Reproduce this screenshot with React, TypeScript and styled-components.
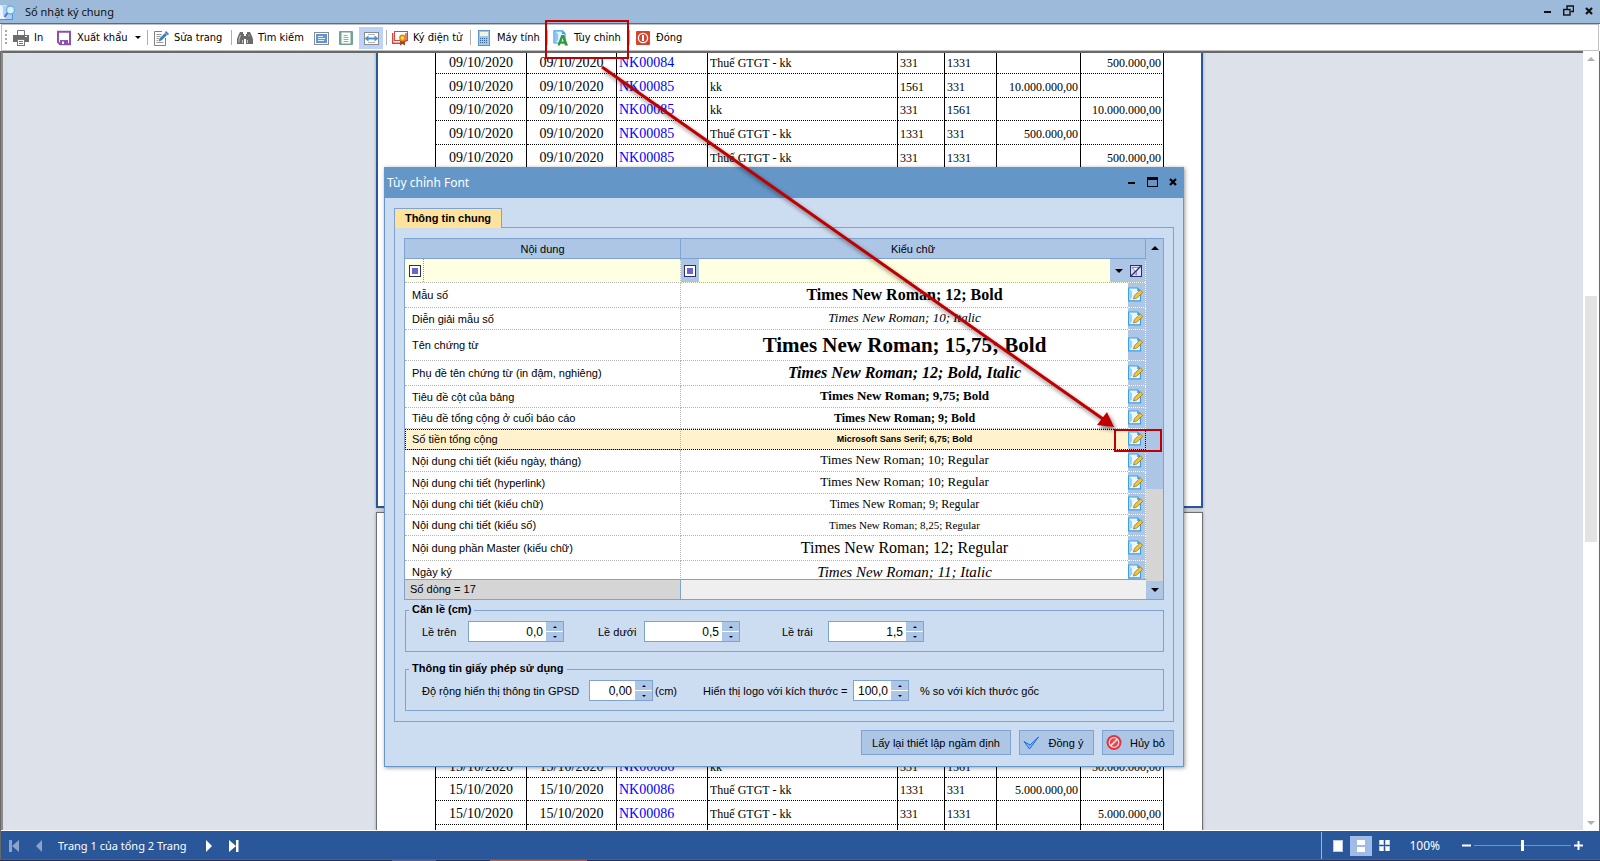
import React from "react";
import styled, { createGlobalStyle, css } from "styled-components";

const UI = `"DejaVu Sans Condensed", "DejaVu Sans", sans-serif`;
const SEGOE = `"Noto Sans", "Open Sans", sans-serif`;
const SANS = `"Liberation Sans", Arial, sans-serif`;
const SERIF = `"Liberation Serif", "Times New Roman", serif`;
const RED = "#c00000";
const LINE = "#7ea3d1";
const FILL = "#adc6e6";

const Global = createGlobalStyle`
  *, *::before, *::after { box-sizing: border-box; }
  body { margin: 0; background: #2f2945; }
  button, input { font: inherit; color: inherit; }
  button { border: 0; padding: 0; background: none; }
`;

/* ---------- application frame ---------- */

const AppFrame = styled.div`
  position: relative;
  display: flex;
  flex-direction: column;
  height: 100vh;
  overflow: hidden;
  background: #fff;
`;

const TitleBar = styled.header`
  display: flex;
  flex: none;
  align-items: center;
  height: 24px;
  padding-right: 4px;
  background: #9dbada;
  border-bottom: 1px solid #696969;
  font: 12px/22px ${SEGOE};
  color: #111;
  svg { flex: none; }
`;

const TitleText = styled.h1`
  flex: 1;
  margin: 0 0 0 9px;
  font-size: 11px;
  font-weight: 400;
`;

const WindowButtons = styled.div`
  display: flex;
  gap: 7px;
  padding-bottom: 2px;
  button { display: flex; width: 14px; height: 14px; align-items: center; justify-content: center; }
`;

const Toolbar = styled.nav`
  display: flex;
  flex: none;
  align-items: center;
  height: 27px;
  margin: 0 1px;
  padding-left: 3px;
  border: 1px solid #c0c0c0;
  background: #fff;
  font: 11px/14px ${UI};
  color: #000;
`;

const Grip = styled.span`
  width: 2px;
  height: 16px;
  margin-right: 1px;
  background: repeating-linear-gradient(#a9a9a9 0 2px, transparent 2px 4px);
`;

const Tool = styled.button<{ $w: number }>`
  display: flex;
  align-items: center;
  gap: 5px;
  flex: none;
  width: ${(p) => p.$w}px;
  height: 22px;
  padding-left: 5px;
  white-space: nowrap;
  svg { flex: none; }
`;

const Caret = styled.svg`
  margin-left: auto;
  margin-right: 6px;
`;

const ViewTool = styled.button<{ $on?: boolean }>`
  display: flex;
  flex: none;
  align-items: center;
  justify-content: center;
  width: 24px;
  height: 22px;
  margin-right: 1px;
  background: ${(p) => (p.$on ? "#bdd3fa" : "transparent")};
`;

const ToolGap = styled.span`
  width: 2px;
  flex: none;
`;

const Sep = styled.span`
  flex: none;
  width: 1px;
  height: 15px;
  background: #b0b0b0;
`;

/* ---------- report preview ---------- */

const Workspace = styled.main`
  display: flex;
  flex: 1;
  min-height: 0;
  border-right: 1px solid #696969;
  border-left: 1px solid #696969;
`;

const Preview = styled.div`
  flex: 1;
  display: flex;
  flex-direction: column;
  align-items: center;
  overflow: hidden;
  padding-right: 7px;
  margin-bottom: 1px;
  border-top: 2px solid #696969;
  border-left: 2px solid #8a8a8a;
  background: #dde1e9;
`;

const Sheet = styled.section<{ $active?: boolean }>`
  flex: none;
  width: 827px;
  background: #fff;
  box-shadow: 0 0 3px #9aa0aa;
  ${(p) =>
    p.$active
      ? css`
          min-height: 458px;
          margin: -3px 0 4px;
          padding-left: 57px;
          border: 2px solid #2a579a;
          border-top: 0;
        `
      : css`
          padding: 241px 0 0 58px;
          border: 1px solid #6f6f6f;
        `}
`;

const Ledger = styled.table`
  table-layout: fixed;
  width: 729px;
  border-collapse: separate;
  border-spacing: 0;
  border-left: 1px solid #000;
  font: 14px/16px ${SERIF};
  color: #000;
`;

const LedgerRow = styled.tr<{ $h: number }>`
  height: ${(p) => p.$h}px;
`;

const Cell = styled.td<{ $kind?: "date" | "text" | "amount" }>`
  padding: 2px 2px 0;
  border-right: 1px solid #000;
  border-bottom: 1px dotted #000;
  text-align: left;
  white-space: nowrap;
  font-size: 12px;
  ${(p) => p.$kind === "date" && "text-align: center; font-size: 14px;"}
  ${(p) => p.$kind === "amount" && "text-align: right;"}
`;

const Voucher = styled.a`
  color: #00f;
  font-size: 14px;
  text-decoration: none;
`;

const DocScroll = styled.div`
  display: flex;
  flex: none;
  flex-direction: column;
  align-items: center;
  width: 16px;
  padding: 6px 0;
  background: #fff;
`;

const DocTrack = styled.div`
  flex: 1;
  display: flex;
  flex-direction: column;
  width: 12px;
  &::before { content: ""; flex: 235; }
  &::after { content: ""; flex: 279; }
`;

const DocThumb = styled.div`
  flex: 245;
  background: #e3e3e3;
`;

/* ---------- status bar ---------- */

const StatusBar = styled.footer`
  display: flex;
  flex: none;
  align-items: center;
  height: 29px;
  padding-top: 1px;
  border-left: 1px solid #696969;
  border-bottom: 1px solid #5b5b75;
  background: #2a579a;
  font: 11px/26px ${SEGOE};
  color: #fff;
`;

const PagerButton = styled.button<{ $w: number }>`
  display: flex;
  align-items: center;
  width: ${(p) => p.$w}px;
  height: 24px;
`;

const PagerText = styled.span`
  width: 148px;
  padding-top: 1px;
`;

const StatusTools = styled.div`
  display: flex;
  align-items: center;
  height: 100%;
  margin-left: auto;
  padding: 0 17px 0 5px;
  border-left: 1px solid #9fb4d6;
`;

const ModeButton = styled.button<{ $on?: boolean }>`
  display: flex;
  align-items: center;
  justify-content: center;
  width: 22px;
  height: 20px;
  background: ${(p) => (p.$on ? "#a0bbe8" : "transparent")};
`;

const ModeGroup = styled.div`
  display: flex;
  align-items: center;
  gap: 1px;
`;

const ZoomText = styled.output`
  margin: 0 22px 0 14px;
  font-size: 12px;
`;

const ZoomStep = styled.button`
  display: flex;
  align-items: center;
`;

const ZoomRange = styled.input`
  appearance: none;
  width: 97px;
  height: 12px;
  margin: 0 3px;
  background: linear-gradient(#6f92c9, #6f92c9) center / 100% 1px no-repeat;
  &::-webkit-slider-thumb { appearance: none; width: 3px; height: 11px; background: #fff; }
  &::-moz-range-thumb { width: 3px; height: 11px; border: 0; border-radius: 0; background: #fff; }
`;

const TaskStrip = styled.div`
  flex: none;
  height: 1px;
  background: linear-gradient(90deg, #2f2945 392px, #5f5a8d 392px 436px, #2f2945 436px 490px, #b5614a 490px 587px, #2f2945 587px);
`;

/* ---------- font dialog ---------- */

const Dialog = styled.section`
  position: absolute;
  top: 167px;
  left: calc(50% - 416px);
  width: 800px;
  border: 1px solid #6496c8;
  background: #ccdcf1;
  box-shadow: 1px 1px 4px rgba(0, 0, 0, 0.4);
  font: 11px/14px ${SANS};
  color: #000;
`;

const DialogTitle = styled.header`
  display: flex;
  align-items: center;
  justify-content: space-between;
  height: 30px;
  padding: 0 3px 0 2px;
  background: #6496c8;
  color: #fff;
  h2 { margin: 0; font: 12px/28px ${SEGOE}; }
  button { color: #000; }
`;

const DialogBody = styled.div`
  padding: 10px 9px 11px;
`;

const Tab = styled.button`
  position: relative;
  display: block;
  width: 108px;
  height: 20px;
  margin-bottom: -1px;
  padding-bottom: 2px;
  border: 1px solid ${LINE};
  border-bottom: 0;
  background: #ffe29b;
  font-weight: 700;
`;

const Panel = styled.div`
  padding: 10px 9px;
  border: 1px solid ${LINE};
`;

const Grid = styled.div`
  display: flex;
  border: 1px solid ${LINE};
  background: #fff;
`;

const GridMain = styled.div`
  flex: 1;
  min-width: 0;
`;

const GridView = styled.div`
  height: 340px;
  overflow: hidden;
`;

const FontTable = styled.table`
  table-layout: fixed;
  width: 100%;
  border-collapse: separate;
  border-spacing: 0;
  th {
    height: 20px;
    padding: 0;
    border-right: 1px solid ${LINE};
    border-bottom: 1px solid ${LINE};
    background: ${FILL};
    font-weight: 400;
    line-height: 18px;
  }
`;

const NameCol = styled.col`
  width: 276px;
`;

const EditCol = styled.col`
  width: 18px;
`;

const FilterCell = styled.td`
  height: 24px;
  padding: 0;
  border-right: 1px dotted #bbb;
  border-bottom: 1px dotted #b4b4b4;
  background: #ffffe1;
`;

const FilterBox = styled.div`
  display: flex;
  height: 23px;
`;

const FilterInput = styled.input`
  flex: 1;
  min-width: 0;
  padding: 0 4px;
  border: 0;
  background: transparent;
`;

const FilterButton = styled.button<{ $w: number; $plain?: boolean }>`
  display: flex;
  flex: none;
  align-items: center;
  justify-content: center;
  width: ${(p) => p.$w}px;
  padding-left: ${(p) => (p.$plain ? 1 : 0)}px;
  background: ${(p) => (p.$plain ? "transparent" : FILL)};
  border-right: ${(p) => (p.$plain ? "1px dotted #999" : "0")};
`;

const FontRow = styled.tr<{ $h: number; $selected?: boolean }>`
  height: ${(p) => p.$h}px;
  background: ${(p) => (p.$selected ? "#fff2cc" : "#fff")};
  ${(p) => p.$selected && "outline: 1px dotted #000; outline-offset: -1px;"}
`;

const NameCell = styled.td`
  padding: 0 0 0 7px;
  border-right: 1px dotted #b4b4b4;
  border-bottom: 1px dotted #b4b4b4;
`;

const SampleCell = styled.td<{ $size: number; $bold?: boolean; $italic?: boolean; $sans?: boolean }>`
  padding: 0 0 1px;
  border-bottom: 1px dotted #b4b4b4;
  text-align: center;
  white-space: nowrap;
  font-family: ${(p) => (p.$sans ? SANS : SERIF)};
  font-size: ${(p) => p.$size}px;
  font-weight: ${(p) => (p.$bold ? 700 : 400)};
  font-style: ${(p) => (p.$italic ? "italic" : "normal")};
  line-height: 18px;
`;

const EditCell = styled.td`
  padding: 0;
  border-right: 1px dotted #fff;
  border-bottom: 1px dotted #fff;
  background: ${FILL};
  button { display: block; }
  svg { display: block; }
`;

const GridFooter = styled.div`
  display: flex;
  height: 20px;
  border-top: 1px solid ${LINE};
  background: #efefef;
  line-height: 18px;
`;

const RowCount = styled.span`
  width: 276px;
  padding-left: 5px;
  border-right: 1px solid ${LINE};
  background: #d5d5d5;
`;

const GridScroll = styled.div`
  display: flex;
  flex: none;
  flex-direction: column;
  width: 17px;
  background: #d5d5d5;
`;

const GridThumb = styled.div`
  height: 232px;
  background: ${FILL};
`;

const ArrowButton = styled.button`
  display: flex;
  align-items: center;
  justify-content: center;
  height: 18px;
  background: ${FILL};
  &:last-child { margin-top: auto; }
`;

const Group = styled.fieldset`
  min-width: 0;
  margin: 2px 0 0 1px;
  padding: 3px 0 9px 16px;
  border: 1px solid ${LINE};
  & + & { margin-top: 9px; }
  legend { margin-left: -13px; padding: 0 3px 2px; font-weight: 700; line-height: 14px; }
`;

const Fields = styled.div`
  display: flex;
  align-items: center;
`;

const FieldLabel = styled.label<{ $w?: number; $before?: number }>`
  width: ${(p) => (p.$w ? `${p.$w}px` : "auto")};
  margin-left: ${(p) => p.$before ?? 0}px;
  padding-top: 1px;
  white-space: nowrap;
`;

const SpinBox = styled.span<{ $w: number }>`
  display: flex;
  flex: none;
  width: ${(p) => p.$w}px;
  height: 21px;
  border: 1px solid ${LINE};
  background: #fff;
  input {
    flex: 1;
    width: 0;
    min-width: 0;
    padding: 0 3px 0 0;
    border: 0;
    background: none;
    text-align: right;
    font-size: 12px;
  }
`;

const SpinButtons = styled.span`
  display: flex;
  flex-direction: column;
  gap: 1px;
  width: 17px;
  button { flex: 1; display: flex; align-items: center; justify-content: center; background: ${FILL}; }
`;

const Actions = styled.div`
  display: flex;
  justify-content: flex-end;
  margin-top: 8px;
`;

const ActionButton = styled.button<{ $w: number }>`
  display: flex;
  align-items: center;
  width: ${(p) => p.$w}px;
  height: 25px;
  margin-left: 8px;
  border: 1px solid ${LINE};
  background: ${FILL};
  svg { flex: none; margin-left: 3px; }
  span { flex: 1; text-align: center; white-space: nowrap; }
`;

const Callout = styled.svg`
  position: absolute;
  top: 0;
  left: calc(50% - 260px);
  pointer-events: none;
`;

const ArrowShape = styled.g`
  filter: drop-shadow(2px 3px 2px rgba(0, 0, 0, 0.5));
`;

/* ---------- icons ---------- */

const Svg = ({ w = 16, h = 16, children }: { w?: number; h?: number; children: React.ReactNode }) => (
  <svg width={w} height={h} viewBox={`0 0 ${w} ${h}`} aria-hidden="true">
    {children}
  </svg>
);

const AppIcon = () => (
  <Svg>
    <path d="M0 1h6v14H0z" fill="#e8f4ff" />
    <path d="M1 1l2 2v8l3 4h6V2H7" fill="#a9d3f5" />
    <path d="M0 15.500h12.500V10" fill="none" stroke="#3e96d8" />
    <circle cx="10.500" cy="6" r="4" fill="#d9f0fd" stroke="#6db1e4" strokeWidth="1.400" />
    <path d="M7.500 9l-3 4" stroke="#6c66c8" strokeWidth="2" />
  </Svg>
);
const PrintIcon = () => (
  <Svg>
    <path d="M4.500 5V.5h7V5" fill="#fff" stroke="#777" />
    <rect x="0" y="5" width="16" height="7" fill="#6c6c6c" />
    <rect x="12" y="6" width="2" height="1" fill="#fff" />
    <rect x="4.500" y="9.500" width="7" height="6" fill="#fff" stroke="#777" />
    <path d="M6 11.500h4M6 13.500h4" stroke="#3b7fd0" />
  </Svg>
);
const SaveIcon = () => (
  <Svg>
    <path d="M2 1.800h12v12.400H4l-2-2z" fill="#fff" stroke="#8a52ae" strokeWidth="2" />
    <rect x="4" y="10" width="8" height="4" fill="#8a52ae" />
    <rect x="6" y="11.500" width="2" height="2.500" fill="#fff" />
  </Svg>
);
const EditPageIcon = () => (
  <Svg>
    <path d="M12.500 8v7.500h-11V1.500H9" fill="#fff" stroke="#808080" />
    <path d="M3.500 4.500h5M3.500 6.500h4M3.500 8.500h2.500M3.500 10.500h1.500M3.500 12.500h7" stroke="#9a9a9a" />
    <path d="M5.500 11.500l1-3 5.500-5.500 2 2L8.500 10.500z" fill="#3c7dbf" />
    <path d="M13 1l3 3-1.200 1.200-3-3z" fill="#3c7dbf" />
  </Svg>
);
const BinocularsIcon = () => (
  <Svg>
    <path d="M3 2h3v2h1v10H0V9l1.500-4zM13 2h-3v2H9v10h7V9l-1.500-4z" fill="#6b6b6b" />
    <path d="M6 6h4v3H6z" fill="#6b6b6b" />
    <path d="M3.500 5L2 9.500v3M12 5v1M10.500 10v3M5.500 10v3" fill="none" stroke="#c9c9c9" />
  </Svg>
);
const WidePageIcon = () => (
  <Svg>
    <rect x="1.500" y="2.500" width="14" height="12" fill="#fff" stroke="#8b8b8b" />
    <rect x="3" y="4" width="11" height="9" fill="#5b97db" />
    <path d="M5 6.500h5M5 8.500h7M5 10.500h6" stroke="#e4effb" />
  </Svg>
);
const TallPageIcon = () => (
  <Svg>
    <rect x="1" y="1" width="14" height="14" rx="1" fill="#72a493" />
    <rect x="3.500" y="2.500" width="9" height="11" fill="#fff" />
    <path d="M5.500 5.500h4M5.500 7.500h5M5.500 9.500h5M5.500 11.500h5" stroke="#a3a3a3" />
  </Svg>
);
const FitWidthIcon = () => (
  <Svg>
    <rect x="1.500" y="2.500" width="14" height="12" fill="#fff" stroke="#8b8b8b" />
    <path d="M5 4.500h7M5 12.500h7" stroke="#b5b5b5" />
    <path d="M1.500 8.500l4-3v2h6v-2l4 3-4 3v-2h-6v2z" fill="#4d8fd4" />
  </Svg>
);
const SignIcon = () => (
  <Svg>
    <rect x="2.500" y="1.500" width="13" height="9" fill="#fff" stroke="#d9453c" />
    <path d="M.7 3v10.300h8M14 3v8h-3" fill="none" stroke="#d9453c" strokeWidth="1.400" />
    <path d="M8 10v5.500l2.500-1.500 2.500 1.500V10z" fill="#a5442c" />
    <circle cx="10.500" cy="8" r="2.600" fill="#ffe63a" stroke="#e08b1e" strokeWidth="1.600" />
  </Svg>
);
const CalcIcon = () => (
  <Svg>
    <rect x="2.500" y=".5" width="11" height="15" fill="#9cc8ee" stroke="#5f97cc" />
    <rect x="4" y="2" width="8" height="4" fill="#f6f2dd" />
    <path d="M4 8.500h8M4 10.500h8M4 12.500h8" stroke="#38628f" strokeDasharray="1 1" />
  </Svg>
);
const CustomIcon = () => (
  <Svg>
    <path d="M1 .8h8.500L12 3.500V13H1z" fill="#dff1fd" stroke="#3f9be0" strokeWidth="1.200" />
    <path d="M2 1l3 3v6l-3 3z" fill="#8cc8f4" />
    <path d="M9 1l3 3H9z" fill="#3f9be0" />
    <path d="M4.500 15.500L8.300 5h2.800l3.900 10.500h-3.200l-.5-2H7.500l-.6 2z M9.500 8l-1 3.500h2.200z" fill="#2f9a3a" fillRule="evenodd" />
  </Svg>
);
const PowerIcon = () => (
  <Svg>
    <rect x="1" y="1" width="14" height="14" rx="1" fill="#d9432a" />
    <circle cx="8" cy="8" r="4.600" fill="none" stroke="#fff" strokeWidth="1.300" />
    <path d="M8 5v6" stroke="#fff" strokeWidth="2" />
  </Svg>
);
const RowEditIcon = () => (
  <Svg>
    <path d="M.6 1h8.900l3 3v9.800H.6z" fill="#e9f6fe" stroke="#3e9fe3" strokeWidth="1.200" />
    <path d="M1.200 1.500L4 4.500v6l-2.800 2.500z" fill="#9ad2f7" />
    <path d="M9.200 .5v3.500h3.500z" fill="#4aa7e6" />
    <path d="M5.500 12l.8-3.200 6-5.800 2.500 2.300-6 5.700z" fill="#f2c638" stroke="#9c7a1f" strokeWidth=".8" />
  </Svg>
);
const FilterMark = () => (
  <Svg w={12} h={12}>
    <rect x=".5" y=".5" width="11" height="11" fill="#fff" stroke="#2c2f6c" />
    <rect x="3" y="3" width="6" height="6" fill="#6a66cc" />
  </Svg>
);
const FilterClear = () => (
  <Svg w={12} h={12}>
    <rect x=".5" y=".5" width="11" height="11" fill="#dcdcff" stroke="#2c2f6c" />
    <path d="M2 2.500h7L6.500 6v4L5 9V6z" fill="#f6f6ff" stroke="#7472c0" strokeWidth=".8" />
    <path d="M1 11L11 1" stroke="#2c2f6c" strokeWidth="1.300" />
  </Svg>
);
const Up = ({ c = "#000" }) => (
  <Svg w={8} h={4}>
    <path d="M0 4h8L4 0z" fill={c} />
  </Svg>
);
const Down = ({ c = "#000" }) => (
  <Svg w={8} h={4}>
    <path d="M0 0h8L4 4z" fill={c} />
  </Svg>
);
const Minimize = () => (
  <Svg w={7} h={8}>
    <path d="M0 5h7" stroke="currentColor" strokeWidth="2" />
  </Svg>
);
const Restore = () => (
  <Svg w={11} h={11}>
    <path d="M4 4V1h6.500v5.500H8" fill="none" stroke="currentColor" strokeWidth="1.400" />
    <rect x=".7" y="4.500" width="6.300" height="5.500" fill="none" stroke="currentColor" strokeWidth="1.400" />
  </Svg>
);
const Maximize = () => (
  <Svg w={11} h={10}>
    <rect x=".5" y=".5" width="10" height="9" fill="none" stroke="currentColor" />
    <path d="M0 1.500h11" stroke="currentColor" strokeWidth="3" />
  </Svg>
);
const Close = () => (
  <Svg w={8} h={8}>
    <path d="M1 1l6 6M7 1L1 7" stroke="currentColor" strokeWidth="2.200" />
  </Svg>
);
const CheckIcon = () => (
  <Svg>
    <path d="M1 6.500L6.500 14 15.500 2 7 10z" fill="#7fb6f2" stroke="#1d6fd0" strokeWidth="1" />
  </Svg>
);
const CancelIcon = () => (
  <Svg>
    <circle cx="8" cy="7.500" r="7.500" fill="#e03540" />
    <circle cx="8" cy="7.500" r="4.800" fill="#e8434e" stroke="#ffd9dc" strokeWidth="1.300" />
    <path d="M4.600 10.900l6.800-6.800" stroke="#ffd9dc" strokeWidth="1.800" />
  </Svg>
);

/* ---------- data ---------- */

type Entry = [number, string, string, string, string, string, string, string];

const firstPage: Entry[] = [
  [24, "09/10/2020", "NK00084", "Thuế GTGT - kk", "331", "1331", "", "500.000,00"],
  [24, "09/10/2020", "NK00085", "kk", "1561", "331", "10.000.000,00", ""],
  [23, "09/10/2020", "NK00085", "kk", "331", "1561", "", "10.000.000,00"],
  [24, "09/10/2020", "NK00085", "Thuế GTGT - kk", "1331", "331", "500.000,00", ""],
  [24, "09/10/2020", "NK00085", "Thuế GTGT - kk", "331", "1331", "", "500.000,00"],
];

const secondPage: Entry[] = [
  [24, "15/10/2020", "NK00086", "kk", "331", "1561", "", "50.000.000,00"],
  [23, "15/10/2020", "NK00086", "Thuế GTGT - kk", "1331", "331", "5.000.000,00", ""],
  [24, "15/10/2020", "NK00086", "Thuế GTGT - kk", "331", "1331", "", "5.000.000,00"],
  [24, "", "", "", "", "", "", ""],
];

interface FontItem {
  h: number;
  name: string;
  sample: string;
  size: number;
  bold?: boolean;
  italic?: boolean;
  sans?: boolean;
  selected?: boolean;
}

const fontItems: FontItem[] = [
  { h: 25, name: "Mẫu số", sample: "Times New Roman; 12; Bold", size: 16, bold: true },
  { h: 22, name: "Diễn giải mẫu số", sample: "Times New Roman; 10; Italic", size: 13, italic: true },
  { h: 31, name: "Tên chứng từ", sample: "Times New Roman; 15,75; Bold", size: 21, bold: true },
  { h: 25, name: "Phụ đề tên chứng từ (in đậm, nghiêng)", sample: "Times New Roman; 12; Bold, Italic", size: 16, bold: true, italic: true },
  { h: 22, name: "Tiêu đề cột của bảng", sample: "Times New Roman; 9,75; Bold", size: 13, bold: true },
  { h: 21, name: "Tiêu đề tổng cộng ở cuối báo cáo", sample: "Times New Roman; 9; Bold", size: 12, bold: true },
  { h: 21, name: "Số tiền tổng cộng", sample: "Microsoft Sans Serif; 6,75; Bold", size: 9, bold: true, sans: true, selected: true },
  { h: 22, name: "Nội dung chi tiết (kiểu ngày, tháng)", sample: "Times New Roman; 10; Regular", size: 13 },
  { h: 22, name: "Nội dung chi tiết (hyperlink)", sample: "Times New Roman; 10; Regular", size: 13 },
  { h: 21, name: "Nội dung chi tiết (kiểu chữ)", sample: "Times New Roman; 9; Regular", size: 12 },
  { h: 21, name: "Nội dung chi tiết (kiểu số)", sample: "Times New Roman; 8,25; Regular", size: 11 },
  { h: 25, name: "Nội dung phần Master (kiểu chữ)", sample: "Times New Roman; 12; Regular", size: 16 },
  { h: 23, name: "Ngày ký", sample: "Times New Roman; 11; Italic", size: 15, italic: true },
];

const ledgerWidths = [91, 90, 91, 190, 47, 52, 84, 83];

/* ---------- parts ---------- */

const LedgerTable = ({ rows }: { rows: Entry[] }) => (
  <Ledger>
    <colgroup>
      {ledgerWidths.map((w, i) => (
        <col key={i} width={w} />
      ))}
    </colgroup>
    <tbody>
      {rows.map(([h, date, no, text, debit, credit, inAmt, outAmt], i) => (
        <LedgerRow key={i} $h={h}>
          <Cell $kind="date">{date}</Cell>
          <Cell $kind="date">{date}</Cell>
          <Cell>{no && <Voucher href="#">{no}</Voucher>}</Cell>
          <Cell>{text}</Cell>
          <Cell>{debit}</Cell>
          <Cell>{credit}</Cell>
          <Cell $kind="amount">{inAmt}</Cell>
          <Cell $kind="amount">{outAmt}</Cell>
        </LedgerRow>
      ))}
    </tbody>
  </Ledger>
);

const Spin = ({ id, w, value }: { id: string; w: number; value: string }) => (
  <SpinBox $w={w}>
    <input id={id} type="text" defaultValue={value} />
    <SpinButtons>
      <button type="button" aria-label="+">
        <Svg w={4} h={2}><path d="M0 2h4L2 0z" fill="#000040" /></Svg>
      </button>
      <button type="button" aria-label="-">
        <Svg w={4} h={2}><path d="M0 0h4L2 2z" fill="#000040" /></Svg>
      </button>
    </SpinButtons>
  </SpinBox>
);

const FontDialog = () => (
  <Dialog role="dialog" aria-labelledby="font-title">
    <DialogTitle>
      <h2 id="font-title">Tùy chỉnh Font</h2>
      <WindowButtons>
        <button type="button"><Minimize /></button>
        <button type="button"><Maximize /></button>
        <button type="button"><Close /></button>
      </WindowButtons>
    </DialogTitle>
    <DialogBody>
      <Tab type="button">Thông tin chung</Tab>
      <Panel>
        <Grid>
          <GridMain>
            <GridView>
              <FontTable>
                <colgroup>
                  <NameCol />
                  <col />
                  <EditCol />
                </colgroup>
                <thead>
                  <tr>
                    <th>Nội dung</th>
                    <th colSpan={2}>Kiểu chữ</th>
                  </tr>
                </thead>
                <tbody>
                  <tr>
                    <FilterCell>
                      <FilterBox>
                        <FilterButton type="button" $w={19} $plain><FilterMark /></FilterButton>
                        <FilterInput aria-label="Nội dung" />
                      </FilterBox>
                    </FilterCell>
                    <FilterCell colSpan={2}>
                      <FilterBox>
                        <FilterButton type="button" $w={18}><FilterMark /></FilterButton>
                        <FilterInput aria-label="Kiểu chữ" />
                        <FilterButton type="button" $w={17}><Down /></FilterButton>
                        <FilterButton type="button" $w={18}><FilterClear /></FilterButton>
                      </FilterBox>
                    </FilterCell>
                  </tr>
                  {fontItems.map((f) => (
                    <FontRow key={f.name} $h={f.h} $selected={f.selected}>
                      <NameCell>{f.name}</NameCell>
                      <SampleCell $size={f.size} $bold={f.bold} $italic={f.italic} $sans={f.sans}>
                        {f.sample}
                      </SampleCell>
                      <EditCell>
                        <button type="button"><RowEditIcon /></button>
                      </EditCell>
                    </FontRow>
                  ))}
                </tbody>
              </FontTable>
            </GridView>
            <GridFooter>
              <RowCount>Số dòng = 17</RowCount>
            </GridFooter>
          </GridMain>
          <GridScroll>
            <ArrowButton type="button"><Up /></ArrowButton>
            <GridThumb />
            <ArrowButton type="button"><Down /></ArrowButton>
          </GridScroll>
        </Grid>
        <Group>
          <legend>Căn lề (cm)</legend>
          <Fields>
            <FieldLabel htmlFor="top" $w={46}>Lề trên</FieldLabel>
            <Spin id="top" w={96} value="0,0" />
            <FieldLabel htmlFor="bottom" $w={46} $before={34}>Lề dưới</FieldLabel>
            <Spin id="bottom" w={96} value="0,5" />
            <FieldLabel htmlFor="left" $w={46} $before={42}>Lề trái</FieldLabel>
            <Spin id="left" w={96} value="1,5" />
          </Fields>
        </Group>
        <Group>
          <legend>Thông tin giấy phép sử dụng</legend>
          <Fields>
            <FieldLabel htmlFor="gpsd" $w={167}>Độ rộng hiển thị thông tin GPSD</FieldLabel>
            <Spin id="gpsd" w={64} value="0,00" />
            <FieldLabel htmlFor="gpsd" $w={48} $before={2}>(cm)</FieldLabel>
            <FieldLabel htmlFor="logo" $w={150}>Hiển thị logo với kích thước =</FieldLabel>
            <Spin id="logo" w={56} value="100,0" />
            <FieldLabel htmlFor="logo" $before={11}>% so với kích thước gốc</FieldLabel>
          </Fields>
        </Group>
      </Panel>
      <Actions>
        <ActionButton type="button" $w={150}><span>Lấy lại thiết lập ngầm định</span></ActionButton>
        <ActionButton type="button" $w={75}><CheckIcon /><span>Đồng ý</span></ActionButton>
        <ActionButton type="button" $w={72}><CancelIcon /><span>Hủy bỏ</span></ActionButton>
      </Actions>
    </DialogBody>
  </Dialog>
);

export default function App() {
  return (
    <>
      <Global />
      <AppFrame>
        <TitleBar>
          <AppIcon />
          <TitleText>Sổ nhật ký chung</TitleText>
          <WindowButtons>
            <button type="button"><Minimize /></button>
            <button type="button"><Restore /></button>
            <button type="button"><Close /></button>
          </WindowButtons>
        </TitleBar>
        <Toolbar>
          <Grip />
          <Tool type="button" $w={43}><PrintIcon />In</Tool>
          <Tool type="button" $w={96}>
            <SaveIcon />Xuất khẩu
            <Caret width="6" height="3" viewBox="0 0 6 3"><path d="M0 0h6L3 3z" /></Caret>
          </Tool>
          <Sep />
          <Tool type="button" $w={83}><EditPageIcon />Sửa trang</Tool>
          <Sep />
          <Tool type="button" $w={77}><BinocularsIcon />Tìm kiếm</Tool>
          <ViewTool type="button"><WidePageIcon /></ViewTool>
          <ViewTool type="button"><TallPageIcon /></ViewTool>
          <ViewTool type="button" $on><FitWidthIcon /></ViewTool>
          <ToolGap />
          <Sep />
          <Tool type="button" $w={83}><SignIcon />Ký điện tử</Tool>
          <Sep />
          <Tool type="button" $w={76}><CalcIcon />Máy tính</Tool>
          <Sep />
          <Tool type="button" $w={81}><CustomIcon />Tùy chỉnh</Tool>
          <Sep />
          <Tool type="button" $w={60}><PowerIcon />Đóng</Tool>
        </Toolbar>
        <Workspace>
          <Preview>
            <Sheet $active>
              <LedgerTable rows={firstPage} />
            </Sheet>
            <Sheet>
              <LedgerTable rows={secondPage} />
            </Sheet>
          </Preview>
          <DocScroll>
            <Up c="#b0b0b0" />
            <DocTrack>
              <DocThumb />
            </DocTrack>
            <Down c="#b0b0b0" />
          </DocScroll>
        </Workspace>
        <StatusBar>
          <PagerButton type="button" $w={27}>
            <Svg w={18} h={12}><path d="M8 0h3v12H8zM18 0v12l-7-6z" fill="#8ba3cd" /></Svg>
          </PagerButton>
          <PagerButton type="button" $w={30}>
            <Svg w={15} h={12}><path d="M14 0v12L8 6z" fill="#8ba3cd" /></Svg>
          </PagerButton>
          <PagerText>Trang 1 của tổng 2 Trang</PagerText>
          <PagerButton type="button" $w={23}>
            <Svg w={7} h={12}><path d="M0 0v12l6-6z" fill="#fff" /></Svg>
          </PagerButton>
          <PagerButton type="button" $w={12}>
            <Svg w={10} h={12}><path d="M0 0v12l7-6zM7 0h2.500v12H7z" fill="#fff" /></Svg>
          </PagerButton>
          <StatusTools>
            <ModeGroup>
              <ModeButton type="button">
                <Svg w={10} h={12}><rect width="10" height="12" fill="#b9cdea" /><rect x="1" y="1" width="8" height="10" fill="#fff" /></Svg>
              </ModeButton>
              <ModeButton type="button" $on>
                <Svg w={10} h={12}><path d="M1 0h8v5H1zM1 7h8v5H1z" fill="#fff" /></Svg>
              </ModeButton>
              <ModeButton type="button">
                <Svg w={11} h={11}><path d="M0 0h5v5H0zM6 0h5v5H6zM0 6h5v5H0zM6 6h5v5H6z" fill="#b9cdea" /><path d="M1 0h3v4H1zM7 0h3v4H7zM1 7h3v4H1zM7 7h3v4H7z" fill="#fff" /></Svg>
              </ModeButton>
            </ModeGroup>
            <ZoomText>100%</ZoomText>
            <ZoomStep type="button"><Svg w={9} h={9}><path d="M0 4.500h9" stroke="#fff" strokeWidth="2" /></Svg></ZoomStep>
            <ZoomRange type="range" min="0" max="200" defaultValue="100" aria-label="100%" />
            <ZoomStep type="button"><Svg w={9} h={9}><path d="M0 4.500h9M4.500 0v9" stroke="#fff" strokeWidth="2" /></Svg></ZoomStep>
          </StatusTools>
        </StatusBar>
        <TaskStrip />
        <FontDialog />
        <Callout width="640" height="470" viewBox="540 0 640 470" aria-hidden="true">
          <rect x="546" y="21" width="82" height="37" fill="none" stroke={RED} strokeWidth="2" />
          <rect x="1115" y="430" width="46" height="21" fill="none" stroke={RED} strokeWidth="2" />
          <ArrowShape>
            <path d="M602 67L1103 419" stroke={RED} strokeWidth="3" />
            <path d="M1114 427l-17-2 10-13z" fill={RED} />
          </ArrowShape>
        </Callout>
      </AppFrame>
    </>
  );
}
